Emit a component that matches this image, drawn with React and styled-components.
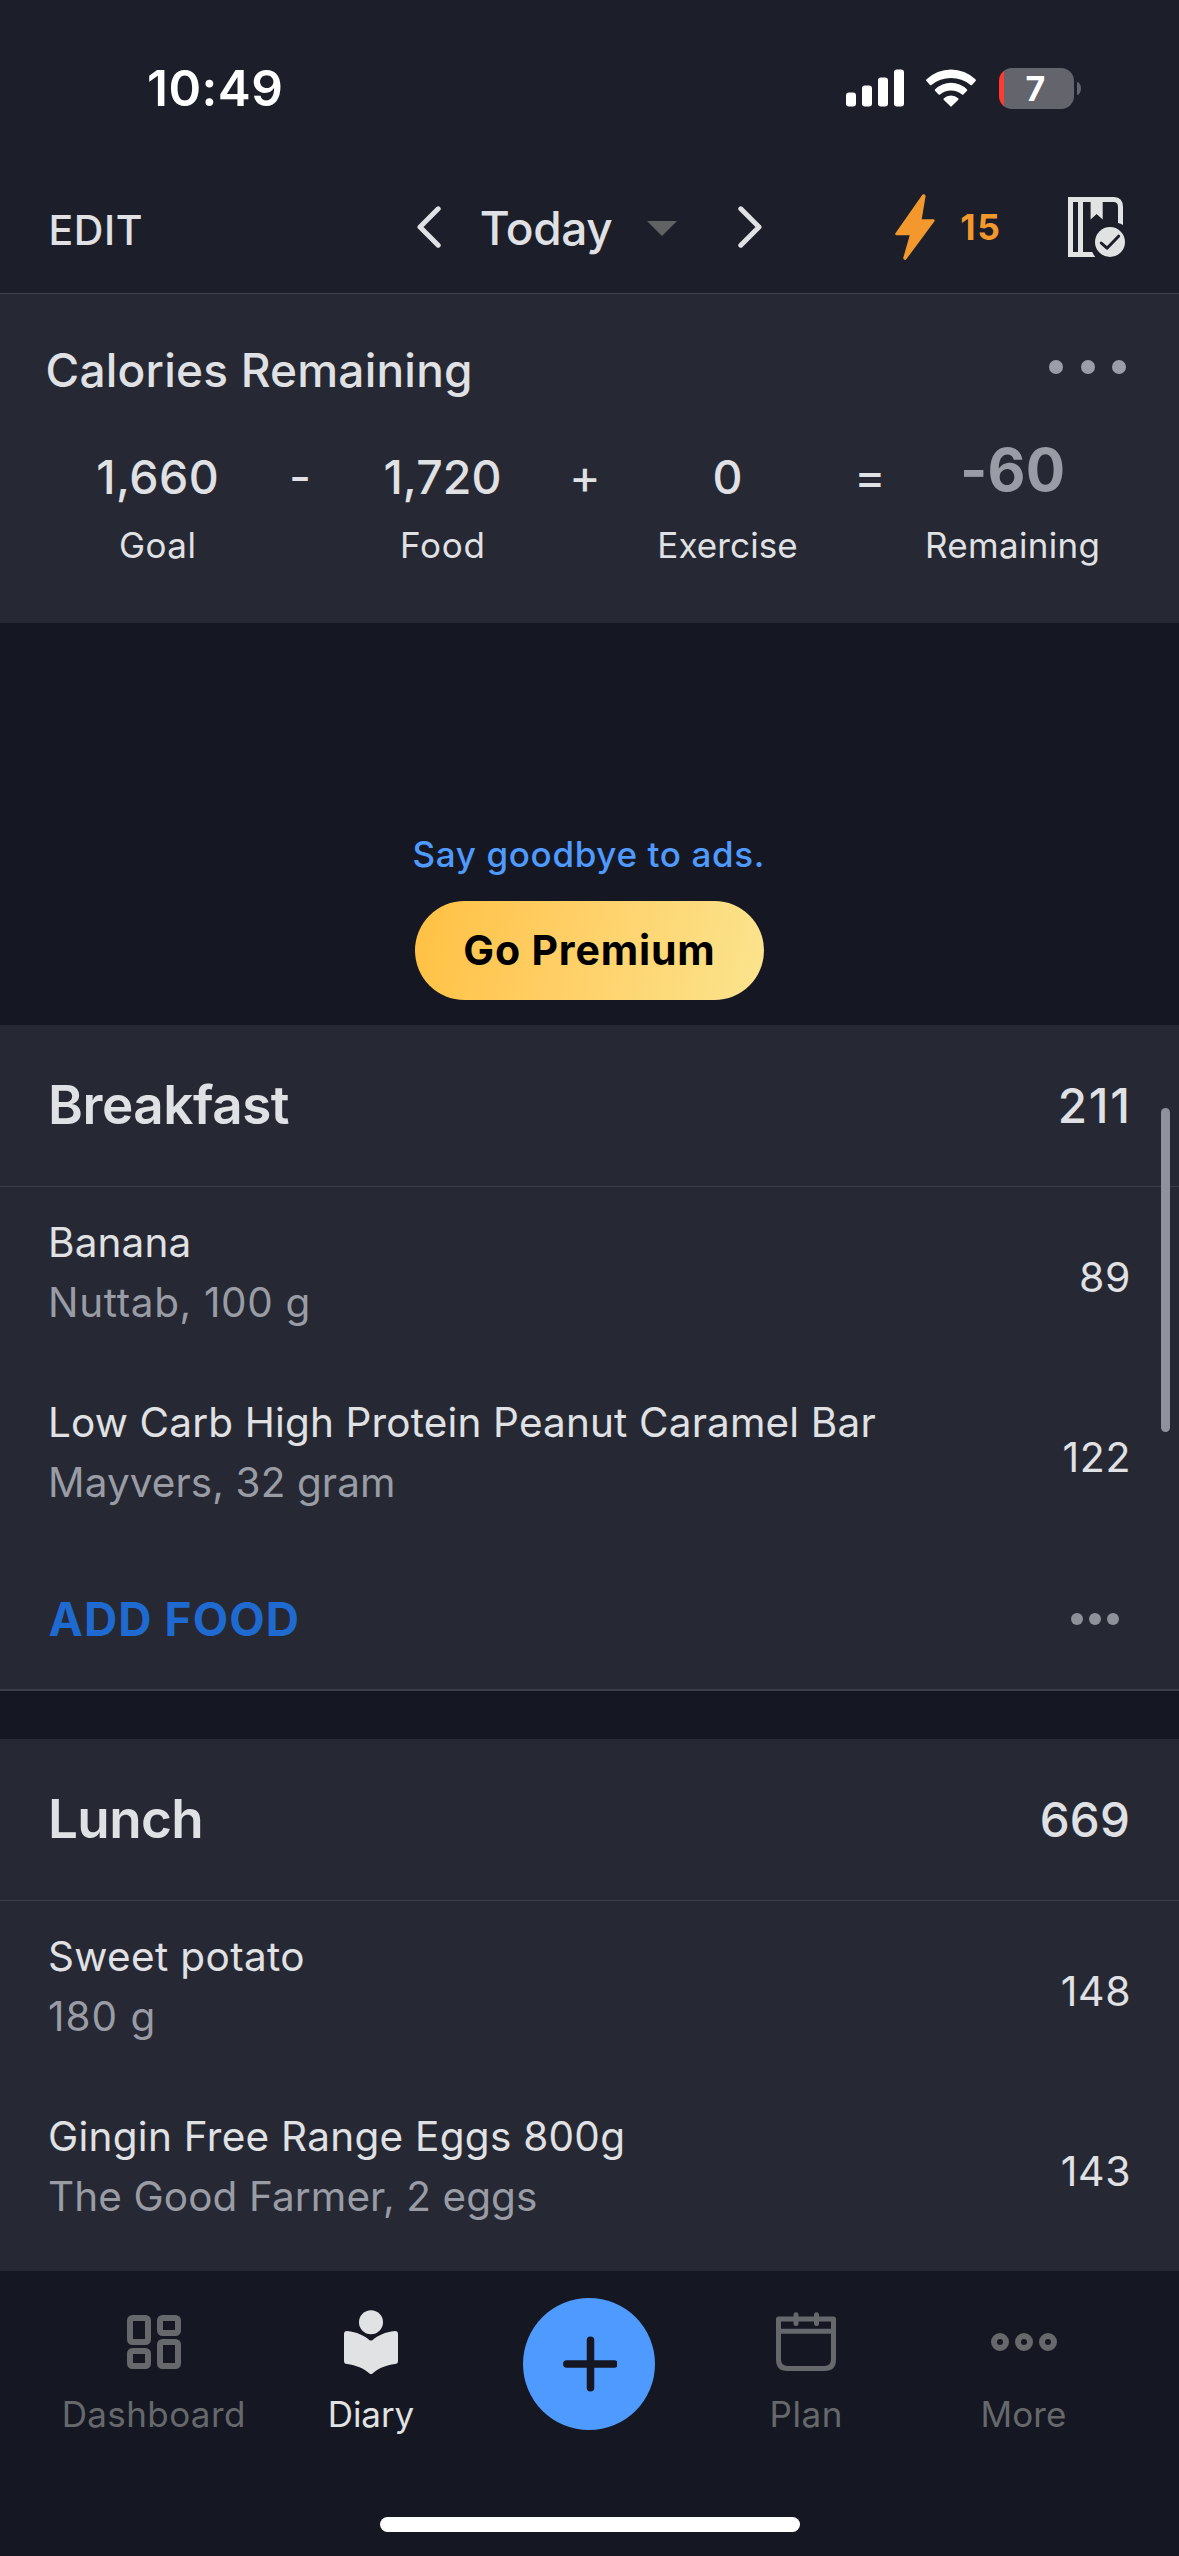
import React from "react";
import styled, { createGlobalStyle } from "styled-components";

const c = {
  page: "#151822",
  header: "#1c1f29",
  panel: "#262933",
  line: "#3b3e49",
  text: "#e0e1e4",
  muted: "#999ca5",
  dim: "#66686c",
  blue: "#4f9aff",
  link: "#1f6ad0",
  orange: "#f2982c",
};

const GlobalStyle = createGlobalStyle`
  * { box-sizing: border-box; }
  body { margin: 0; background: ${c.page}; }
  button { border: 0; padding: 0; background: none; font: inherit; }
  svg { display: block; flex: none; }
`;

const Screen = styled.main`
  position: relative;
  display: flex;
  flex-direction: column;
  width: 1179px;
  height: 2556px;
  overflow: hidden;
  background: ${c.page};
  color: ${c.text};
  font-family: Inter, "Liberation Sans", sans-serif;
`;

const Text = styled.span`
  font-size: ${(p) => p.$size}px;
  font-weight: ${(p) => p.$weight || 400};
  line-height: ${(p) => p.$line || 60}px;
  letter-spacing: ${(p) => p.$track || 0}px;
  margin-right: ${(p) => -(p.$track || 0)}px;
  color: ${(p) => p.$color || "inherit"};
  white-space: nowrap;
`;

/* ---------- header ---------- */

const Header = styled.header`
  flex: none;
  height: 294px;
  background: ${c.header};
  border-bottom: 1px solid #41434f;
`;

const StatusBar = styled.div`
  display: flex;
  align-items: center;
  justify-content: space-between;
  height: 161px;
  padding: 15px 98px 0 147px;
`;

const StatusIcons = styled.div`
  display: flex;
  align-items: center;
`;

const Battery = styled.div`
  display: flex;
  align-items: center;
  gap: 3px;
  margin-left: 23px;
`;

const BatteryBody = styled.div`
  display: flex;
  align-items: center;
  justify-content: center;
  width: 75px;
  height: 41px;
  padding-right: 2px;
  border-radius: 13px;
  background: linear-gradient(90deg, #ff3b30 5px, #63646c 5px);
  color: #fff;
`;

const BatteryCap = styled.div`
  width: 4px;
  height: 13px;
  border-radius: 0 4px 4px 0 / 0 6.5px 6.5px 0;
  background: #63646c;
`;

const Toolbar = styled.div`
  display: grid;
  grid-template-columns: 1fr auto 1fr;
  align-items: center;
  height: 132px;
  padding: 0 54px 0 48.5px;
`;

const EditButton = styled.button`
  justify-self: start;
  display: flex;
  padding-top: 6px;
  color: inherit;
`;

const DatePicker = styled.div`
  display: flex;
  align-items: center;
  margin-left: 5px;
`;

const DateLabel = styled.div`
  display: flex;
  align-items: center;
  gap: 34px;
  padding-top: 2px;
  margin: 0 61px 0 39px;
`;

const ToolbarActions = styled.div`
  justify-self: end;
  display: flex;
  align-items: center;
`;

const Streak = styled.div`
  display: flex;
  align-items: center;
  gap: 25px;
  margin-right: 68px;
  color: ${c.orange};
`;

const StreakCount = styled.div`
  display: flex;
  padding-top: 2px;
`;

/* ---------- calories ---------- */

const Summary = styled.section`
  flex: none;
  height: 329px;
  background: ${c.panel};
`;

const SummaryTitle = styled.div`
  display: flex;
  align-items: center;
  justify-content: space-between;
  height: 153px;
  padding: 0 53px 2px 45.5px;
`;

const Dots = styled.div`
  display: flex;
  gap: ${(p) => p.$gap}px;
  margin-top: ${(p) => p.$shift || 0}px;
  i {
    width: ${(p) => p.$size}px;
    height: ${(p) => p.$size}px;
    border-radius: 50%;
    background: ${(p) => p.$color};
  }
`;

const Equation = styled.div`
  display: flex;
  justify-content: center;
  padding-right: 9px;
`;

const Term = styled.div`
  display: flex;
  flex-direction: column;
  align-items: center;
  width: ${(p) => (p.$operator ? 105 : 180)}px;
`;

/* ---------- promo ---------- */

const Promo = styled.section`
  flex: none;
  display: flex;
  flex-direction: column;
  align-items: center;
  justify-content: flex-end;
  gap: 25px;
  height: 402px;
  padding-bottom: 25px;
`;

const PromoNote = styled.div`
  display: flex;
  padding-right: 2px;
`;

const PremiumButton = styled.button`
  display: flex;
  align-items: center;
  justify-content: center;
  width: 349px;
  height: 99px;
  padding: 0 1px 1px 0;
  border-radius: 50px;
  background: linear-gradient(102deg, #ffc246 4%, #ffcd62 38%, #fbe38c 97%);
  color: #000;
`;

/* ---------- meals ---------- */

const Meal = styled.section`
  flex: ${(p) => (p.$grow ? 1 : "none")};
  margin-bottom: ${(p) => (p.$grow ? 0 : 48)}px;
  background: ${c.panel};
`;

const MealHeader = styled.div`
  display: flex;
  align-items: center;
  justify-content: space-between;
  height: 162px;
  padding: 0 49px 2px 48px;
  border-bottom: 1px solid ${c.line};
`;

const MealTotal = styled.div`
  display: flex;
  padding-top: 3px;
`;

const FoodRow = styled.div`
  display: flex;
  justify-content: space-between;
  align-items: flex-start;
  height: 180px;
  padding: 26px 48.5px 0 48px;
`;

const FoodInfo = styled.div`
  display: flex;
  flex-direction: column;
`;

const FoodCalories = styled.div`
  display: flex;
  padding-top: 34px;
`;

const MealFooter = styled.div`
  display: flex;
  align-items: center;
  justify-content: space-between;
  height: 144px;
  padding: 2px 60px 0 48.5px;
  border-bottom: 2px solid ${c.line};
`;

const ScrollThumb = styled.div`
  position: absolute;
  top: 1108px;
  right: 9px;
  width: 9px;
  height: 324px;
  border-radius: 5px;
  background: #8f929b;
`;

/* ---------- tab bar ---------- */

const TabBar = styled.nav`
  flex: none;
  display: flex;
  flex-direction: column;
  align-items: center;
  height: 285px;
  background: ${c.page};
`;

const Tabs = styled.div`
  display: flex;
  justify-content: center;
  width: 100%;
  height: 246px;
  padding-right: 2px;
`;

const Tab = styled.div`
  display: flex;
  flex-direction: column;
  align-items: center;
  width: 217.5px;
  padding-top: 30px;
  color: ${(p) => (p.$active ? "#e1e2e4" : c.dim)};
`;

const TabIcon = styled.div`
  display: flex;
  align-items: center;
  justify-content: center;
  height: 82px;
`;

const AddButton = styled.button`
  display: flex;
  align-items: center;
  justify-content: center;
  width: 132px;
  height: 132px;
  margin: 27px 42.75px 0;
  border-radius: 50%;
  background: ${c.blue};
`;

const HomeIndicator = styled.div`
  width: 420px;
  height: 15px;
  border-radius: 8px;
  background: #fff;
`;

/* ---------- icons ---------- */

const Signal = () => (
  <svg width="58" height="38" viewBox="0 0 58 38" fill="#fff">
    <rect x="0" y="23.5" width="10" height="14" rx="3" />
    <rect x="16" y="16.5" width="10" height="21" rx="3" />
    <rect x="32" y="8.5" width="10" height="29" rx="3" />
    <rect x="48" y="0.5" width="10" height="37" rx="3" />
  </svg>
);

const WifiIcon = styled.svg`
  margin-left: 22px;
`;

const Wifi = () => (
  <WifiIcon width="50" height="38" viewBox="0 0 50 38" fill="#fff">
    <path d="M0.6 10.3A35 35 0 0 1 49.4 10.3Q50.4 11.2 49.6 12L46 15.9Q45.4 16.5 44.6 15.9A31 31 0 0 0 5.4 15.9Q4.6 16.5 4 15.9L0.4 12Q-0.4 11.2 0.6 10.3Z" />
    <path d="M9.2 20.3A22.5 22.5 0 0 1 40.8 20.3Q41.6 21 41 21.7L37.4 25.5Q36.8 26.1 36 25.5A17.5 17.5 0 0 0 14 25.5Q13.2 26.1 12.6 25.5L9 21.7Q8.4 21 9.2 20.3Z" />
    <path d="M17.9 29.2A10.5 10.5 0 0 1 32.1 29.2Q33 30 32.3 30.8L25.7 37.3Q25 38 24.3 37.3L17.7 30.8Q17 30 17.9 29.2Z" />
  </WifiIcon>
);

const Chevron = ({ right }) => (
  <svg width="24" height="42" viewBox="0 0 24 42" fill="none" stroke={c.text} strokeWidth="5" strokeLinecap="round" strokeLinejoin="round">
    <path d={right ? "M2.8 2.8L21 21L2.8 39.2" : "M21.2 2.8L3 21L21.2 39.2"} />
  </svg>
);

const Caret = () => (
  <svg width="30" height="15" viewBox="0 0 30 15" fill="#606264">
    <path d="M0 0H30L15 15Z" />
  </svg>
);

const Bolt = () => (
  <svg width="40" height="66" viewBox="0 0 40 66" fill={c.orange} stroke={c.orange} strokeWidth="2.6" strokeLinejoin="round">
    <path d="M28.4 1.5L29.3 2L25.2 26.5H38.4L10.2 64.6L9.5 64.2L16.4 40H1.5Z" />
  </svg>
);

const Journal = () => (
  <svg width="57" height="60" viewBox="0 0 57 60">
    <path
      fill="#e1e3e3"
      fillRule="evenodd"
      d="M0 0H46Q55 0.5 55 10V28Q52.7 26.6 50 26V10Q50 5 45.5 5H34.7V22.5L28.6 17L22.6 22.5V5H15V55H24.3Q25.4 57.8 27.3 60H0ZM5 5V55H10V5Z"
    />
    <circle cx="42" cy="45" r="15" fill="#e1e3e3" />
    <path d="M33.2 46L39 51.2L50.6 39.2" fill="none" stroke={c.header} strokeWidth="3" strokeLinecap="round" strokeLinejoin="round" />
  </svg>
);

const DashboardIcon = () => (
  <svg width="54" height="54" viewBox="0 0 54 54" fill="none" stroke="#66686c" strokeWidth="6">
    <rect x="3" y="3" width="18" height="24" rx="2.5" />
    <rect x="33" y="3" width="18" height="15" rx="2.5" />
    <rect x="3" y="36" width="18" height="15" rx="2.5" />
    <rect x="33" y="27" width="18" height="24" rx="2.5" />
  </svg>
);

const DiaryIcon = () => (
  <svg width="54" height="65" viewBox="0 0 54 65" fill="#e1e2e4">
    <circle cx="27" cy="12.2" r="12" />
    <path d="M3 21C13 22 20 25.5 25.3 29.9Q27 31.2 28.7 29.9C34 25.5 41 22 51 21Q54 21 54 24V51Q54 53.8 51 54C42 55 34 58.6 28.5 63.4Q27 64.8 25.5 63.4C20 58.6 12 55 3 54Q0 53.8 0 51V24Q0 21 3 21Z" />
  </svg>
);

const PlanIcon = () => (
  <svg width="60" height="60" viewBox="0 0 60 60" fill="none" stroke="#66686c" strokeWidth="5" strokeLinecap="round">
    <path d="M2.5 7H57.5V47.5Q57.5 56.5 48.5 56.5H11.5Q2.5 56.5 2.5 47.5Z" strokeLinejoin="round" />
    <path d="M3 19.2H57M20 2.7V11.5M40.5 2.7V11.5" />
  </svg>
);

const MoreIcon = () => (
  <svg width="66" height="18" viewBox="0 0 66 18" fill="none" stroke="#66686c" strokeWidth="6">
    <circle cx="9" cy="9" r="6" />
    <circle cx="33" cy="9" r="6" />
    <circle cx="57" cy="9" r="6" />
  </svg>
);

const Plus = () => (
  <svg width="56" height="56" viewBox="0 0 56 56" stroke={c.page} strokeWidth="7.5" strokeLinecap="round">
    <path d="M29.5 4.3V51.7M5.8 28H53.2" />
  </svg>
);

/* ---------- data ---------- */

const equation = [
  { value: "1,660", label: "Goal", track: 0.5, labelTrack: 0.4 },
  { op: "-" },
  { value: "1,720", label: "Food", track: 0.1, labelTrack: 0.8 },
  { op: "+" },
  { value: "0", label: "Exercise", labelTrack: 0.1 },
  { op: "=" },
  { value: "-60", label: "Remaining", result: true, labelTrack: 0.3 },
];

const breakfast = [
  { name: "Banana", detail: "Nuttab, 100 g", calories: "89", detailTrack: 0.65 },
  { name: "Low Carb High Protein Peanut Caramel Bar", detail: "Mayvers, 32 gram", calories: "122", detailTrack: 0.09 },
];

const lunch = [
  { name: "Sweet potato", detail: "180 g", calories: "148", nameTrack: 0.35, detailTrack: 1 },
  { name: "Gingin Free Range Eggs 800g", detail: "The Good Farmer, 2 eggs", calories: "143", nameTrack: 0.27, detailTrack: 0.1 },
];

const tabs = [
  { label: "Dashboard", Icon: DashboardIcon, track: 0.4 },
  { label: "Diary", Icon: DiaryIcon, active: true, track: -0.1 },
  null,
  { label: "Plan", Icon: PlanIcon, track: 0.6 },
  { label: "More", Icon: MoreIcon, track: 0.1 },
];

const Foods = ({ items }) =>
  items.map((f) => (
    <FoodRow key={f.name}>
      <FoodInfo>
        <Text $size={40.5} $track={f.nameTrack || 0.15}>{f.name}</Text>
        <Text $size={40.5} $track={f.detailTrack} $color={c.muted}>{f.detail}</Text>
      </FoodInfo>
      <FoodCalories>
        <Text $size={41} $track={0.6}>{f.calories}</Text>
      </FoodCalories>
    </FoodRow>
  ));

export default function App() {
  return (
    <Screen>
      <GlobalStyle />
      <Header>
        <StatusBar>
          <Text $size={49.5} $weight={600} $track={0.5} $color="#fff">10:49</Text>
          <StatusIcons>
            <Signal />
            <Wifi />
            <Battery>
              <BatteryBody>
                <Text $size={34} $weight={700} $line={41}>7</Text>
              </BatteryBody>
              <BatteryCap />
            </Battery>
          </StatusIcons>
        </StatusBar>
        <Toolbar>
          <EditButton>
            <Text $size={41} $weight={550} $track={0.6}>EDIT</Text>
          </EditButton>
          <DatePicker>
            <Chevron />
            <DateLabel>
              <Text $size={46} $weight={500} $track={-0.35}>Today</Text>
              <Caret />
            </DateLabel>
            <Chevron right />
          </DatePicker>
          <ToolbarActions>
            <Streak>
              <Bolt />
              <StreakCount>
                <Text $size={35.5} $weight={700} $track={1.8}>15</Text>
              </StreakCount>
            </Streak>
            <Journal />
          </ToolbarActions>
        </Toolbar>
      </Header>

      <Summary>
        <SummaryTitle>
          <Text $size={46} $weight={500} $track={0.21}>Calories Remaining</Text>
          <Dots $size={14} $gap={17.5} $color="#9b9ea6" $shift={-5}><i /><i /><i /></Dots>
        </SummaryTitle>
        <Equation>
          {equation.map((t) =>
            t.op ? (
              <Term key={t.op} $operator>
                <Text $size={48}>{t.op}</Text>
              </Term>
            ) : (
              <Term key={t.label}>
                {t.result ? (
                  <Text $size={58.5} $weight={700} $track={0.2} $line={46} $color={c.muted}>{t.value}</Text>
                ) : (
                  <Text $size={46.5} $weight={450} $track={t.track}>{t.value}</Text>
                )}
                <Text $size={35} $line={t.result ? 104 : 76} $track={t.labelTrack}>{t.label}</Text>
              </Term>
            )
          )}
        </Equation>
      </Summary>

      <Promo>
        <PromoNote>
          <Text $size={35} $weight={500} $line={44} $track={0.64} $color={c.blue}>Say goodbye to ads.</Text>
        </PromoNote>
        <PremiumButton>
          <Text $size={41} $weight={700} $track={0.85}>Go Premium</Text>
        </PremiumButton>
      </Promo>

      <Meal>
        <MealHeader>
          <Text $size={53} $weight={600} $track={-0.45}>Breakfast</Text>
          <MealTotal>
            <Text $size={47.5} $weight={450} $track={1.8}>211</Text>
          </MealTotal>
        </MealHeader>
        <Foods items={breakfast} />
        <MealFooter>
          <Text $size={46} $weight={700} $track={1.1} $color={c.link}>ADD FOOD</Text>
          <Dots $size={12} $gap={6} $color="#8f9199"><i /><i /><i /></Dots>
        </MealFooter>
      </Meal>

      <Meal $grow>
        <MealHeader>
          <Text $size={53} $weight={600} $track={-0.6}>Lunch</Text>
          <MealTotal>
            <Text $size={47.5} $weight={450} $track={0.3}>669</Text>
          </MealTotal>
        </MealHeader>
        <Foods items={lunch} />
      </Meal>

      <TabBar>
        <Tabs>
          {tabs.map((t) =>
            t ? (
              <Tab key={t.label} $active={t.active}>
                <TabIcon><t.Icon /></TabIcon>
                <Text $size={35} $line={62} $track={t.track}>{t.label}</Text>
              </Tab>
            ) : (
              <AddButton key="add"><Plus /></AddButton>
            )
          )}
        </Tabs>
        <HomeIndicator />
      </TabBar>
      <ScrollThumb />
    </Screen>
  );
}
